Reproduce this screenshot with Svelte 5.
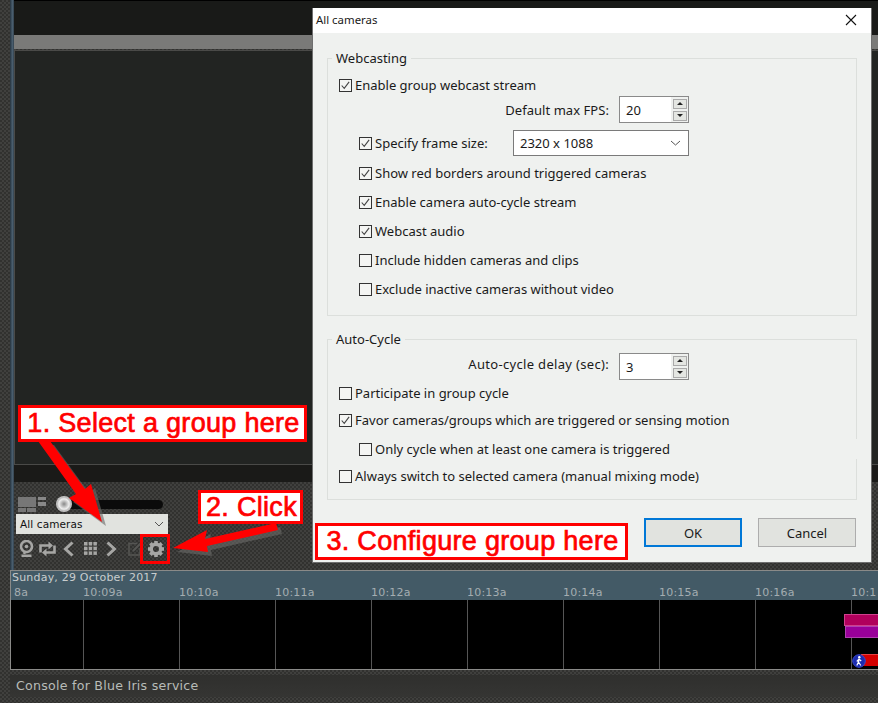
<script>
  const ticks = ['10:09a','10:10a','10:11a','10:12a','10:13a','10:14a','10:15a','10:16a','10:1'];
</script>

{#snippet check(on)}
  <span class="box">
    {#if on}<svg viewBox="0 0 13 13" width="11" height="11"><path d="M2 6.5 L5 9.8 L10.8 2.2" fill="none" stroke="#444" stroke-width="1.3"/></svg>{/if}
  </span>
{/snippet}

{#snippet spin(v)}
  <div class="spin">
    <span class="val">{v}</span>
    <div class="btns">
      <span class="sb"><i class="up"></i></span>
      <span class="sb"><i class="down"></i></span>
    </div>
  </div>
{/snippet}

<div class="page">
  <div class="upper">
    <div class="rail"></div>
    <div class="edge"></div>
    <div class="work">
      <div class="topdark"></div>
      <div class="graybar"></div>
      <div class="video"></div>
      <div class="gap"></div>
      <div class="panel">
        <div class="sliderrow">
          <svg class="layout" width="28" height="15" viewBox="0 0 28 15">
            <rect x="0" y="0" width="18" height="10" fill="#777"/>
            <rect x="0" y="11" width="8" height="4" fill="#777"/><rect x="9" y="11" width="9" height="4" fill="#777"/>
            <rect x="20" y="0" width="8" height="3" fill="#888"/><rect x="20" y="5" width="8" height="4" fill="#888"/>
          </svg>
          <div class="slider"><span class="track"></span><span class="knob"></span></div>
        </div>
        <div class="combo"><span>All cameras</span>
          <svg width="10" height="6" viewBox="0 0 10 6"><path d="M1 1 L5 5 L9 1" fill="none" stroke="#555" stroke-width="1"/></svg>
        </div>
        <div class="tools">
          <svg class="t-cam" width="15" height="17" viewBox="0 0 15 17"><circle cx="7.5" cy="6.5" r="5.5" fill="none" stroke="#a6a6a4" stroke-width="2.6"/><circle cx="7.5" cy="6.5" r="1.8" fill="#a6a6a4"/><path d="M5.5 12 V14 M2.5 15.8 H12.5" stroke="#a6a6a4" stroke-width="2.4"/></svg>
          <svg class="t-cyc" width="17" height="16" viewBox="0 0 17 16"><path d="M1.5 11.5 V4.5 H10 M15.5 4.5 V11.5 H7" fill="none" stroke="#a6a6a4" stroke-width="2.6"/><path d="M9.5 0.5 L14 4.5 L9.5 8.5Z M7.5 7.5 L3 11.5 L7.5 15.5Z" fill="#a6a6a4"/></svg>
          <svg class="t-prev" width="11" height="16" viewBox="0 0 11 16"><path d="M9.5 1.5 L2.5 8 L9.5 14.5" fill="none" stroke="#a6a6a4" stroke-width="3"/></svg>
          <svg class="t-grid" width="13" height="13" viewBox="0 0 13 13" fill="#a6a6a4"><rect width="3.5" height="3.5"/><rect x="4.7" width="3.5" height="3.5"/><rect x="9.4" width="3.5" height="3.5"/><rect y="4.7" width="3.5" height="3.5"/><rect x="4.7" y="4.7" width="3.5" height="3.5"/><rect x="9.4" y="4.7" width="3.5" height="3.5"/><rect y="9.4" width="3.5" height="3.5"/><rect x="4.7" y="9.4" width="3.5" height="3.5"/><rect x="9.4" y="9.4" width="3.5" height="3.5"/></svg>
          <svg class="t-next" width="11" height="16" viewBox="0 0 11 16"><path d="M1.5 1.5 L8.5 8 L1.5 14.5" fill="none" stroke="#a6a6a4" stroke-width="3"/></svg>
          <svg class="t-edit" width="14" height="14" viewBox="0 0 14 14"><path d="M9 1.5 H1 V13 H12 V6" fill="none" stroke="#555553" stroke-width="1.5"/><path d="M5 9 L12.5 1.5" stroke="#555553" stroke-width="2"/></svg>
          <svg class="t-gear" width="16" height="16" viewBox="0 0 17 17"><g fill="#a6a6a4"><circle cx="8.5" cy="8.5" r="5" fill="none" stroke="#a6a6a4" stroke-width="3.6"/><rect x="6.6" y="0" width="3.8" height="3.6"/><rect x="6.6" y="13.4" width="3.8" height="3.6"/><rect x="0" y="6.6" width="3.6" height="3.8"/><rect x="13.4" y="6.6" width="3.6" height="3.8"/><g transform="rotate(45 8.5 8.5)"><rect x="6.6" y="0" width="3.8" height="3.6"/><rect x="6.6" y="13.4" width="3.8" height="3.6"/><rect x="0" y="6.6" width="3.6" height="3.8"/><rect x="13.4" y="6.6" width="3.6" height="3.8"/></g></g></svg>
        </div>
      </div>
    </div>
  </div>

  <div class="timeline">
    <div class="tlhead">
      <div class="date">Sunday, 29 October 2017</div>
      <div class="hours">
        <span class="first">8a</span>
        {#each ticks as t}<span class="hour">{t}</span>{/each}
      </div>
    </div>
    <div class="tlbody">
      <span class="firstcol"></span>
      {#each ticks as t}<span class="col"></span>{/each}
      <i class="ev pink"></i><i class="ev purple"></i><i class="ev red"></i>
      <svg class="walker" width="14" height="14" viewBox="0 0 14 14"><circle cx="7" cy="7" r="6.3" fill="#1c2cb0" stroke="#3a4ad0"/><circle cx="7.3" cy="3.3" r="1.2" fill="#fff"/><path d="M7 5 L6.5 8 L4.8 11.5 M6.5 8 L8.8 11.5 M4.8 7.5 L7 5 L9.2 7" fill="none" stroke="#fff" stroke-width="1.2"/></svg>
    </div>
  </div>

  <div class="status"><div class="statusbar">Console for Blue Iris service</div></div>

  <section class="dialog">
    <header class="title"><span>All cameras</span>
      <svg width="12" height="12" viewBox="0 0 12 12"><path d="M1 1 L11 11 M11 1 L1 11" stroke="#111" stroke-width="1.1"/></svg>
    </header>
    <div class="body">
      <div class="group g1">
        <span class="legend">Webcasting</span>
        <div class="row r-enable">{@render check(true)}<span>Enable group webcast stream</span></div>
        <div class="row r-fps"><span class="rlabel">Default max FPS:</span>{@render spin('20')}</div>
        <div class="row sub r-frame">{@render check(true)}<span class="flabel">Specify frame size:</span>
          <div class="dd"><span>2320 x 1088</span><svg width="11" height="6" viewBox="0 0 11 6"><path d="M1 1 L5.5 5 L10 1" fill="none" stroke="#555" stroke-width="1"/></svg></div>
        </div>
        <div class="row sub m7">{@render check(true)}<span>Show red borders around triggered cameras</span></div>
        <div class="row sub m9">{@render check(true)}<span>Enable camera auto-cycle stream</span></div>
        <div class="row sub m9">{@render check(true)}<span>Webcast audio</span></div>
        <div class="row sub m9">{@render check(false)}<span>Include hidden cameras and clips</span></div>
        <div class="row sub m9">{@render check(false)}<span>Exclude inactive cameras without video</span></div>
      </div>

      <div class="group g2">
        <span class="legend">Auto-Cycle</span>
        <div class="row r-delay"><span class="rlabel dl">Auto-cycle delay (sec):</span>{@render spin('3')}</div>
        <div class="row r-part">{@render check(false)}<span>Participate in group cycle</span></div>
        <div class="row m7">{@render check(true)}<span>Favor cameras/groups which are triggered or sensing motion</span></div>
        <div class="row sub m9 notch">{@render check(false)}<span>Only cycle when at least one camera is triggered</span></div>
        <div class="row m7">{@render check(false)}<span>Always switch to selected camera (manual mixing mode)</span></div>
      </div>

      <div class="actions">
        <button class="btn primary">OK</button>
        <button class="btn">Cancel</button>
      </div>
    </div>
  </section>

  <svg class="arrows" width="878" height="703" viewBox="0 0 878 703">
    <g fill="#6a6a68" opacity=".6" transform="translate(4 4)">
      <path d="M38 441 L50 441 L85 489 L91 484 L102 522 L69 498 L76 494Z"/>
      <path d="M173 548 L207 530 L205 539 L276 523 L278 530 L207 546 L208 552Z"/>
    </g>
    <path d="M38 441 L50 441 L85 489 L91 484 L102 522 L69 498 L76 494Z" fill="#f00"/>
    <path d="M173 548 L207 530 L205 539 L276 523 L278 530 L207 546 L208 552Z" fill="#f00"/>
    <rect x="141.5" y="535.5" width="27" height="27" fill="none" stroke="#f00" stroke-width="3"/>
  </svg>

  <div class="note n1">1. Select a group here</div>
  <div class="note n2">2. Click</div>
  <div class="note n3">3. Configure group here</div>
</div>

<style>
  :global(body) { margin: 0; background: #333; }
  .page {
    position: relative; width: 878px; height: 703px; overflow: hidden;
    display: flex; flex-direction: column;
    font-family: "DejaVu Sans", sans-serif;
    background: repeating-conic-gradient(#40403e 0 25%, #31312f 0 50%) 0 0 / 4px 4px;
  }
  .upper { display: flex; height: 570px; flex: none; }
  .rail { width: 10px; }
  .edge { width: 4px; background: linear-gradient(90deg, #26333d, #4a5f70 60%, #33414c); }
  .work { flex: 1; display: flex; flex-direction: column; min-width: 0; }
  .topdark { height: 35px; background: #191a18; border-top: 1px solid #000; box-sizing: border-box; }
  .graybar { height: 14px; background: #7a7a78; flex: none; }
  .video { height: 415px; background: #222422; border: 1px solid #4a4a48; border-width: 1px 0 1px 1px; box-sizing: border-box; flex: none; margin-top: 1px; }
  .gap { height: 17px; background: #1a1a18; flex: none; }
  .panel { flex: 1; padding: 13px 0 0 2px; }
  .sliderrow { display: flex; align-items: center; height: 19px; padding-left: 2px; gap: 10px; }
  .layout { flex: none; }
  .slider { position: relative; width: 107px; height: 17px; }
  .track { position: absolute; left: 8px; right: 0; top: 4px; height: 9px; border-radius: 5px; background: #0b0b0b; }
  .knob { position: absolute; left: 0; top: 0; width: 16px; height: 16px; border-radius: 50%; background: radial-gradient(circle at 50% 50%, #888, #eee 45%, #bbb 60%, #eee); }
  .combo {
    width: 152px; height: 20px; box-sizing: border-box; padding: 0 4px;
    background: #e1e3df; color: #111; font-size: 10.5px; letter-spacing: .1px;
    display: flex; align-items: center; justify-content: space-between;
  }
  .tools { display: flex; align-items: center; height: 27px; padding: 1px 0 0 3px; }
  .t-cyc { margin-left: 5px; }
  .t-prev { margin-left: 7px; }
  .t-grid { margin-left: 10px; }
  .t-next { margin-left: 9px; }
  .t-edit { margin-left: 11px; }
  .t-gear { margin-left: 6px; }

  .timeline { flex: none; margin-left: 10px; height: 100px; border: solid #8a8a88; border-width: 1px 0 1px 1px; box-sizing: border-box; display: flex; flex-direction: column; }
  .tlhead { height: 29px; background: #435a66; color: #b9c0c2; font-size: 11px; overflow: hidden; flex: none; letter-spacing: .2px; }
  .date { height: 14px; line-height: 13px; padding-left: 1px; color: #c8cdce; }
  .hours { display: flex; height: 15px; line-height: 16px; color: #a4adb1; white-space: nowrap; }
  .first { width: 72px; flex: none; box-sizing: border-box; padding-left: 3px; }
  .hour { width: 96px; flex: none; }
  .tlbody { position: relative; flex: 1; background: #000; display: flex; }
  .firstcol { width: 72px; flex: none; }
  .col { width: 96px; flex: none; border-left: 1px solid #555; box-sizing: border-box; }
  .ev { position: absolute; display: block; left: 833px; right: 0; box-sizing: border-box; }
  .pink { top: 14px; height: 12px; background: #b0005c; border: 1px solid #d0408c; border-right: 0; }
  .purple { top: 26px; left: 834px; height: 12px; background: #990099; border: 1px solid #b040b0; border-right: 0; }
  .red { top: 54px; left: 850px; height: 12px; background: #d40000; border-top: 1px solid #e64040; }
  .walker { position: absolute; left: 841px; top: 54px; }

  .status { flex: 1; padding-top: 5px; }
  .statusbar { height: 22px; margin-left: 10px; background: linear-gradient(#2f2f2d, #353533); color: #b8bcb8; font-size: 12.6px; line-height: 22px; padding-left: 6px; letter-spacing: .25px; }

  .dialog {
    position: absolute; left: 312px; top: 8px; width: 560px; height: 555px; box-sizing: border-box;
    border: 1px solid #6e6e6e; border-top: 0; background: #eff1ef; color: #1a1a1a;
    font-family: "Noto Sans", "Open Sans", sans-serif; font-size: 13px;
    display: flex; flex-direction: column;
  }
  .title { height: 25px; box-sizing: border-box; flex: none; background: #fff; display: flex; align-items: center; justify-content: space-between; padding: 0 14px 2px 3px; font-size: 11.4px; }
  .body { flex: 1; padding: 25px 14px 0 14px; display: flex; flex-direction: column; }
  .group { position: relative; border: 1px solid #dcdfdc; box-sizing: border-box; }
  .g1 { height: 258px; padding: 16px 0 0 11px; }
  .g2 { height: 161px; margin-top: 23px; padding: 13px 0 0 11px; }
  .legend { position: absolute; left: 4px; top: -9px; line-height: 17px; padding: 0 4px; background: #eff1ef; }
  .row { display: flex; align-items: center; height: 20px; white-space: nowrap; gap: 3px; }
  .sub { padding-left: 20px; }
  .m7 { margin-top: 7px; }
  .m9 { margin-top: 9px; }
  .r-fps { height: 27px; margin-top: 1px; justify-content: flex-end; padding-right: 167px; gap: 10px; }
  .r-delay { height: 27px; justify-content: flex-end; padding-right: 167px; gap: 10px; }
  .rlabel { letter-spacing: .05px; }
  .dl { letter-spacing: .32px; padding-bottom: 5px; }
  .r-frame { height: 26px; margin-top: 7px; }
  .flabel { width: 135px; flex: none; }
  .r-part { margin-top: 3px; }
  .notch { background: #eff1ef; margin-right: -1px; }
  .box { width: 13px; height: 13px; box-sizing: border-box; border: 1px solid #333; background: #f4f5f3; display: inline-flex; align-items: center; justify-content: center; flex: none; }
  .spin { width: 70px; height: 27px; box-sizing: border-box; border: 1px solid #8a8a8a; background: #fff; display: flex; justify-content: space-between; align-items: center; padding-left: 6px; flex: none; }
  .btns { width: 17px; height: 25px; background: #eff1ef; display: flex; flex-direction: column; justify-content: center; gap: 2px; padding-left: 2px; box-sizing: border-box; }
  .sb { width: 14px; height: 10px; box-sizing: border-box; border: 1px solid #aaa; background: #e4e6e2; display: flex; align-items: center; justify-content: center; }
  .sb i { display: block; width: 0; height: 0; border-left: 3px solid transparent; border-right: 3px solid transparent; }
  .up { border-bottom: 3px solid #222; }
  .down { border-top: 3px solid #222; }
  .dd { width: 176px; height: 26px; box-sizing: border-box; border: 1px solid #7a7a7a; background: #fff; display: flex; align-items: center; justify-content: space-between; padding: 0 7px 0 6px; flex: none; }
  .actions { display: flex; justify-content: flex-end; gap: 16px; margin: 18px 1px 0 0; }
  .btn { width: 98px; height: 29px; box-sizing: border-box; border: 1px solid #adadad; background: #e1e3df; font: inherit; color: #1a1a1a; padding: 0; }
  .primary { border: 2px solid #0078d7; }

  .arrows { position: absolute; left: 0; top: 0; pointer-events: none; }
  .note {
    position: absolute; box-sizing: border-box; background: #fff; border: 3px solid #f00; color: #f00;
    font-family: "Liberation Sans", Arial, sans-serif; font-size: 27px; letter-spacing: .3px; white-space: nowrap;
    display: flex; align-items: center; justify-content: center; -webkit-text-stroke: .7px #f00; padding-left: 2px;
  }
  .n1 { left: 18px; top: 405px; width: 289px; height: 37px; }
  .n2 { left: 198px; top: 490px; width: 105px; height: 34px; }
  .n3 { left: 315px; top: 523px; width: 313px; height: 37px; }
</style>
